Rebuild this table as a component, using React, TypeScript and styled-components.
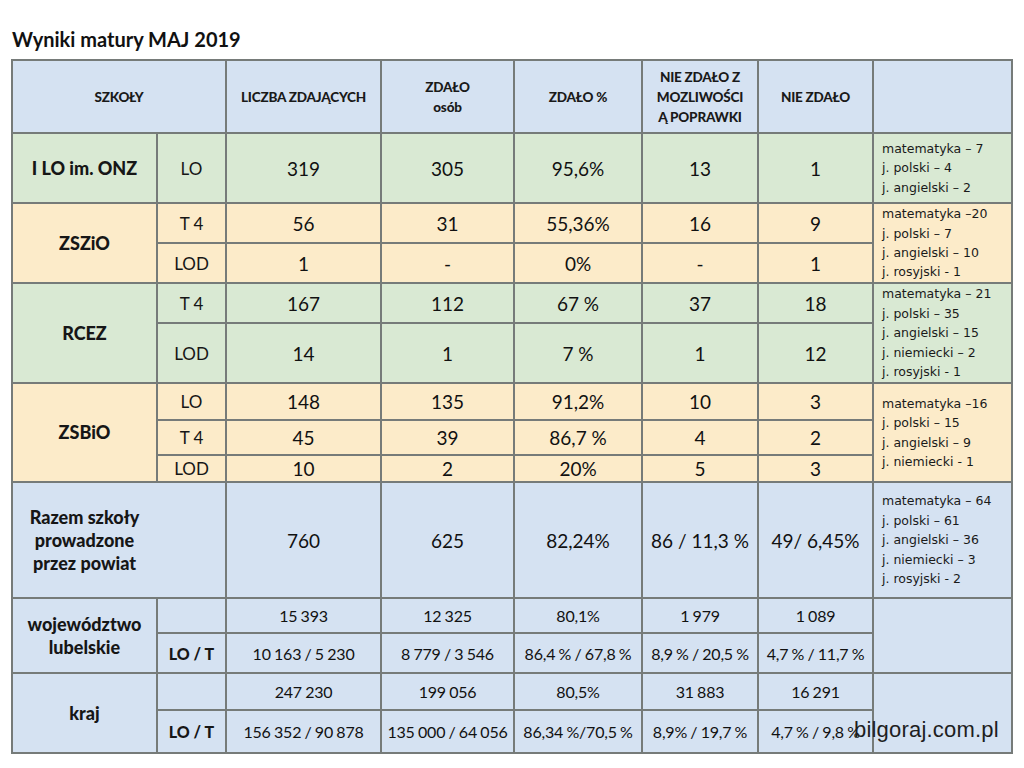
import React from "react";
import styled, { createGlobalStyle } from "styled-components";

const GlobalStyle = createGlobalStyle`
  html, body { margin: 0; padding: 0; background: #ffffff; }
  body { font-family: Lato, "Open Sans", "Liberation Sans", sans-serif; color: #161616; }
`;

const BLUE = "#d5e2f2";
const GREEN = "#d9e9d3";
const YELLOW = "#fcebc9";
const LINE = "#767b79";

type Tone = "blue" | "green" | "yellow";
const toneColor = (t: Tone) => (t === "blue" ? BLUE : t === "green" ? GREEN : YELLOW);

const Page = styled.div`
  position: relative;
  width: 1024px;
  height: 768px;
  padding: 0 0 0 11px;
  box-sizing: border-box;
  overflow: hidden;
`;

const Title = styled.h1`
  margin: 0;
  height: 59px;
  box-sizing: border-box;
  padding: 27px 0 0 1px;
  font-size: 20px;
  font-weight: 700;
  line-height: 24px;
  color: #111;
`;

const Table = styled.table`
  border-collapse: collapse;
  table-layout: fixed;
  width: 1000px;
  border: 2px solid #8d9290;
`;

const Row = styled.tr<{ $h: number }>`
  height: ${(p) => p.$h}px;
`;

const Cell = styled.td<{ $tone: Tone }>`
  background: ${(p) => toneColor(p.$tone)};
  border: 2px solid ${LINE};
  padding: 0;
  text-align: center;
  vertical-align: middle;
  overflow: hidden;
`;

const HeadCell = styled(Cell).attrs({ as: "th" })`
  font-size: 13.5px;
  font-weight: 900;
  line-height: 20px;
  letter-spacing: -0.2px;
  text-transform: uppercase;
  color: #1a1a1a;
`;

const HeadSub = styled.span`
  text-transform: none;
`;

const NameCell = styled(Cell)<{ $padRight?: number }>`
  font-size: 18px;
  font-weight: 900;
  line-height: 23px;
  padding-right: ${(p) => p.$padRight ?? 0}px;
`;

const TypeCell = styled(Cell)<{ $bold?: boolean }>`
  font-size: ${(p) => (p.$bold ? 16 : 17)}px;
  font-weight: ${(p) => (p.$bold ? 900 : 400)};
`;

const NumCell = styled(Cell)`
  font-size: 19px;
  font-weight: 400;
  color: #111;
`;

const SmallCell = styled(Cell)`
  font-size: 16px;
  font-weight: 400;
  letter-spacing: -0.2px;
  word-spacing: -0.6px;
  white-space: nowrap;
  color: #111;
`;

const NoteCell = styled(Cell)`
  text-align: left;
  padding-left: 8px;
  font-family: "DejaVu Sans", Lato, sans-serif;
  font-size: 12.5px;
  line-height: 19.4px;
  white-space: nowrap;
  color: #1a1a1a;
`;

const NoteLine = styled.div``;

const Watermark = styled.div`
  position: absolute;
  left: 854px;
  top: 717px;
  font-family: "Liberation Sans", Arial, sans-serif;
  font-size: 22px;
  color: #1e1e1e;
  letter-spacing: 0.2px;
`;

const Notes = ({ lines }: { lines: string[] }) => (
  <>
    {lines.map((l, i) => (
      <NoteLine key={i}>{l}</NoteLine>
    ))}
  </>
);

export default function App() {
  return (
    <Page>
      <GlobalStyle />
      <Title>Wyniki matury MAJ 2019</Title>
      <Table>
        <colgroup>
          <col style={{ width: 145 }} />
          <col style={{ width: 69 }} />
          <col style={{ width: 155 }} />
          <col style={{ width: 133 }} />
          <col style={{ width: 128 }} />
          <col style={{ width: 116 }} />
          <col style={{ width: 115 }} />
          <col style={{ width: 139 }} />
        </colgroup>
        <thead>
          <Row $h={73}>
            <HeadCell $tone="blue" colSpan={2}>SZKOŁY</HeadCell>
            <HeadCell $tone="blue">LICZBA ZDAJĄCYCH</HeadCell>
            <HeadCell $tone="blue">
              ZDAŁO
              <br />
              <HeadSub>osób</HeadSub>
            </HeadCell>
            <HeadCell $tone="blue">ZDAŁO %</HeadCell>
            <HeadCell $tone="blue">
              NIE ZDAŁO Z
              <br />
              MOZLIWOŚCI
              <br />Ą POPRAWKI
            </HeadCell>
            <HeadCell $tone="blue">NIE ZDAŁO</HeadCell>
            <HeadCell $tone="blue"></HeadCell>
          </Row>
        </thead>
        <tbody>
          <Row $h={70}>
            <NameCell $tone="green">I LO im. ONZ</NameCell>
            <TypeCell $tone="green">LO</TypeCell>
            <NumCell $tone="green">319</NumCell>
            <NumCell $tone="green">305</NumCell>
            <NumCell $tone="green">95,6%</NumCell>
            <NumCell $tone="green">13</NumCell>
            <NumCell $tone="green">1</NumCell>
            <NoteCell $tone="green">
              <Notes lines={["matematyka – 7", "j. polski – 4", "j. angielski – 2"]} />
            </NoteCell>
          </Row>

          <Row $h={40}>
            <NameCell $tone="yellow" rowSpan={2}>ZSZiO</NameCell>
            <TypeCell $tone="yellow">T 4</TypeCell>
            <NumCell $tone="yellow">56</NumCell>
            <NumCell $tone="yellow">31</NumCell>
            <NumCell $tone="yellow">55,36%</NumCell>
            <NumCell $tone="yellow">16</NumCell>
            <NumCell $tone="yellow">9</NumCell>
            <NoteCell $tone="yellow" rowSpan={2}>
              <Notes lines={["matematyka –20", "j. polski – 7", "j. angielski – 10", "j. rosyjski - 1"]} />
            </NoteCell>
          </Row>
          <Row $h={40}>
            <TypeCell $tone="yellow">LOD</TypeCell>
            <NumCell $tone="yellow">1</NumCell>
            <NumCell $tone="yellow">-</NumCell>
            <NumCell $tone="yellow">0%</NumCell>
            <NumCell $tone="yellow">-</NumCell>
            <NumCell $tone="yellow">1</NumCell>
          </Row>

          <Row $h={40}>
            <NameCell $tone="green" rowSpan={2}>RCEZ</NameCell>
            <TypeCell $tone="green">T 4</TypeCell>
            <NumCell $tone="green">167</NumCell>
            <NumCell $tone="green">112</NumCell>
            <NumCell $tone="green">67 %</NumCell>
            <NumCell $tone="green">37</NumCell>
            <NumCell $tone="green">18</NumCell>
            <NoteCell $tone="green" rowSpan={2}>
              <Notes
                lines={["matematyka – 21", "j. polski – 35", "j. angielski – 15", "j. niemiecki – 2", "j. rosyjski - 1"]}
              />
            </NoteCell>
          </Row>
          <Row $h={60}>
            <TypeCell $tone="green">LOD</TypeCell>
            <NumCell $tone="green">14</NumCell>
            <NumCell $tone="green">1</NumCell>
            <NumCell $tone="green">7 %</NumCell>
            <NumCell $tone="green">1</NumCell>
            <NumCell $tone="green">12</NumCell>
          </Row>

          <Row $h={37}>
            <NameCell $tone="yellow" rowSpan={3}>ZSBiO</NameCell>
            <TypeCell $tone="yellow">LO</TypeCell>
            <NumCell $tone="yellow">148</NumCell>
            <NumCell $tone="yellow">135</NumCell>
            <NumCell $tone="yellow">91,2%</NumCell>
            <NumCell $tone="yellow">10</NumCell>
            <NumCell $tone="yellow">3</NumCell>
            <NoteCell $tone="yellow" rowSpan={3}>
              <Notes lines={["matematyka –16", "j. polski – 15", "j. angielski – 9", "j. niemiecki - 1"]} />
            </NoteCell>
          </Row>
          <Row $h={35}>
            <TypeCell $tone="yellow">T 4</TypeCell>
            <NumCell $tone="yellow">45</NumCell>
            <NumCell $tone="yellow">39</NumCell>
            <NumCell $tone="yellow">86,7 %</NumCell>
            <NumCell $tone="yellow">4</NumCell>
            <NumCell $tone="yellow">2</NumCell>
          </Row>
          <Row $h={27}>
            <TypeCell $tone="yellow">LOD</TypeCell>
            <NumCell $tone="yellow">10</NumCell>
            <NumCell $tone="yellow">2</NumCell>
            <NumCell $tone="yellow">20%</NumCell>
            <NumCell $tone="yellow">5</NumCell>
            <NumCell $tone="yellow">3</NumCell>
          </Row>

          <Row $h={116}>
            <NameCell $tone="blue" colSpan={2} $padRight={69}>
              Razem szkoły
              <br />
              prowadzone
              <br />
              przez powiat
            </NameCell>
            <NumCell $tone="blue">760</NumCell>
            <NumCell $tone="blue">625</NumCell>
            <NumCell $tone="blue">82,24%</NumCell>
            <NumCell $tone="blue">86 / 11,3 %</NumCell>
            <NumCell $tone="blue">49/ 6,45%</NumCell>
            <NoteCell $tone="blue">
              <Notes
                lines={["matematyka – 64", "j. polski – 61", "j. angielski – 36", "j. niemiecki – 3", "j. rosyjski - 2"]}
              />
            </NoteCell>
          </Row>

          <Row $h={35}>
            <NameCell $tone="blue" rowSpan={2}>
              województwo
              <br />
              lubelskie
            </NameCell>
            <TypeCell $tone="blue"></TypeCell>
            <SmallCell $tone="blue">15 393</SmallCell>
            <SmallCell $tone="blue">12 325</SmallCell>
            <SmallCell $tone="blue">80,1%</SmallCell>
            <SmallCell $tone="blue">1 979</SmallCell>
            <SmallCell $tone="blue">1 089</SmallCell>
            <NoteCell $tone="blue" rowSpan={2}></NoteCell>
          </Row>
          <Row $h={40}>
            <TypeCell $tone="blue" $bold>LO / T</TypeCell>
            <SmallCell $tone="blue">10 163 / 5 230</SmallCell>
            <SmallCell $tone="blue">8 779 / 3 546</SmallCell>
            <SmallCell $tone="blue">86,4 % / 67,8 %</SmallCell>
            <SmallCell $tone="blue">8,9 % / 20,5 %</SmallCell>
            <SmallCell $tone="blue">4,7 % / 11,7 %</SmallCell>
          </Row>

          <Row $h={37}>
            <NameCell $tone="blue" rowSpan={2}>kraj</NameCell>
            <TypeCell $tone="blue"></TypeCell>
            <SmallCell $tone="blue">247 230</SmallCell>
            <SmallCell $tone="blue">199 056</SmallCell>
            <SmallCell $tone="blue">80,5%</SmallCell>
            <SmallCell $tone="blue">31 883</SmallCell>
            <SmallCell $tone="blue">16 291</SmallCell>
            <NoteCell $tone="blue" rowSpan={2}></NoteCell>
          </Row>
          <Row $h={43}>
            <TypeCell $tone="blue" $bold>LO / T</TypeCell>
            <SmallCell $tone="blue">156 352 / 90 878</SmallCell>
            <SmallCell $tone="blue">135 000 / 64 056</SmallCell>
            <SmallCell $tone="blue">86,34 %/70,5 %</SmallCell>
            <SmallCell $tone="blue">8,9% / 19,7 %</SmallCell>
            <SmallCell $tone="blue">4,7 % / 9,8 %</SmallCell>
          </Row>
        </tbody>
      </Table>
      <Watermark>bilgoraj.com.pl</Watermark>
    </Page>
  );
}
